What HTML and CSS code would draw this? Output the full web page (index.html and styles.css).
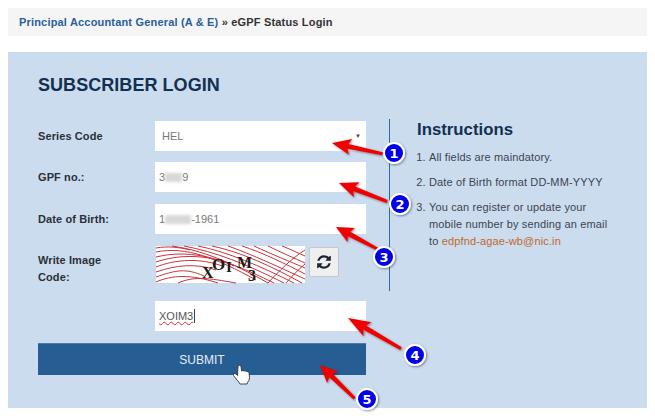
FILE: index.html
```html
<!doctype html>
<html lang="en">

<head>
  <meta charset="utf-8" />
  <title>eGPF Status Login</title>
  <link rel="stylesheet" href="styles.css">
</head>

<body>
  <div class="breadcrumb">
    <a href="#">Principal Accountant General (A &amp; E)</a> <span class="sep">»</span> eGPF Status Login
  </div>

  <div class="panel">
    <h2>SUBSCRIBER LOGIN</h2>
    <div class="columns">
      <form class="login">
        <div class="row first-row">
          <label>Series Code</label>
          <div class="field select">HEL<span class="caret">▼</span></div>
        </div>
        <div class="row">
          <label>GPF no.:</label>
          <div class="field">3<span class="smudge s-short"></span>9</div>
        </div>
        <div class="row">
          <label>Date of Birth:</label>
          <div class="field">1<span class="smudge s-long"></span>-1961</div>
        </div>
        <div class="row captcha-row">
          <label>Write Image Code:</label>
          <div class="captcha-wrap">
            <svg class="captcha" width="149" height="37" viewBox="0 0 149 37">
              <rect width="149" height="37" fill="#fff" />
              <g fill="none" stroke="#c8343f" stroke-width="1">
                <path d="M0 6 C30 0 60 12 100 34" />
                <path d="M0 11 C30 4 60 8 118 37" />
                <path d="M0 16 C20 9 50 7 78 20" />
                <path d="M0 21 C20 13 45 12 66 20" />
                <path d="M0 26 C20 19 40 17 60 24" />
                <path d="M0 31 C20 24 30 22 48 30" />
                <path d="M0 36 C16 29 34 28 62 37" />
                <path d="M16 0 C45 4 75 16 112 37" />
                <path d="M28 0 C60 6 90 18 128 37" />
                <path d="M42 0 C72 6 104 20 138 37" />
                <path d="M56 0 C85 6 115 20 146 37" />
                <path d="M72 0 C95 8 125 22 149 33" />
                <path d="M86 0 C105 6 130 18 149 28" />
                <path d="M98 0 C115 8 135 16 149 22" />
                <path d="M112 0 C124 6 138 12 149 17" />
                <path d="M126 0 C134 3 142 7 149 10" />
                <path d="M112 37 C122 26 136 12 149 4" />
                <path d="M130 37 C136 30 142 24 149 18" />
                <path d="M0 2 C12 0 22 1 34 4" />
                <path d="M22 37 C38 30 52 32 80 37" />
              </g>
              <g class="captcha-text" fill="#1a1a1a">
                <text x="46" y="32" font-size="16">X</text>
                <text x="56" y="24" font-size="17">O</text>
                <text x="70" y="26" font-size="15">I</text>
                <text x="81" y="22" font-size="16">M</text>
                <text x="92" y="35" font-size="16">3</text>
              </g>
            </svg>
            <button type="button" class="refresh">
              <svg width="16" height="16" viewBox="0 0 1792 1792">
                <path fill="#1c2530" d="M1639 1056q0 5-1 7-64 268-268 434.5t-478 166.5q-146 0-282.5-55t-243.5-157l-129 129q-19 19-45 19t-45-19-19-45v-448q0-26 19-45t45-19h448q26 0 45 19t19 45-19 45l-137 137q71 66 161 102t187 36q134 0 250-65t186-179q11-17 53-117 8-23 30-23h192q13 0 22.5 9.5t9.5 22.5zm25-800v448q0 26-19 45t-45 19h-448q-26 0-45-19t-19-45 19-45l138-138q-148-137-349-137-134 0-250 65t-186 179q-11 17-53 117-8 23-30 23h-199q-13 0-22.5-9.5t-9.5-22.5v-7q65-268 270-434.5t480-166.5q146 0 284 55.5t245 156.5l130-129q19-19 45-19t45 19 19 45z" />
              </svg>
            </button>
          </div>
        </div>
        <div class="row">
          <label></label>
          <div class="field"><span class="typed">XOIM3</span><span class="text-cursor"></span></div>
        </div>
        <button type="button" class="submit">SUBMIT</button>
      </form>

      <div class="instructions">
        <h3>Instructions</h3>
        <ol>
          <li>All fields are maindatory.</li>
          <li>Date of Birth format DD-MM-YYYY</li>
          <li>You can register or update your mobile number by sending an email to <a href="#">edpfnd-agae-wb@nic.in</a></li>
        </ol>
      </div>
    </div>
  </div>

  <!-- annotations pasted over the screenshot -->
  <svg class="marks" width="655" height="420" viewBox="0 0 655 420">
    <defs>
      <filter id="soft" x="-30%" y="-30%" width="160%" height="160%">
        <feDropShadow dx="1" dy="1" stdDeviation="1" flood-color="#000" flood-opacity="0.45" />
      </filter>
      <path id="arrow" d="M0 0 L22 -8 L19 -2.500 L60 -1.500 L60 1.500 L19 2.500 L22 8 Z" fill="#f00000" />
    </defs>
    <g filter="url(#soft)">
      <use href="#arrow" transform="translate(332 143) rotate(12) scale(0.86 1)" />
      <use href="#arrow" transform="translate(339 183) rotate(21) scale(0.86 1)" />
      <use href="#arrow" transform="translate(336 227) rotate(28) scale(0.78 1)" />
      <use href="#arrow" transform="translate(348 318) rotate(30) scale(1.02 1)" />
      <use href="#arrow" transform="translate(320 365) rotate(44) scale(0.8 1)" />
    </g>

    <g class="badge" filter="url(#soft)">
      <circle cx="394" cy="153" r="10" />
      <circle cx="400" cy="204" r="10" />
      <circle cx="384" cy="257" r="10" />
      <circle cx="415" cy="355" r="10" />
      <circle cx="367" cy="399" r="10" />
    </g>
    <g class="badge-num">
      <text x="394" y="158">1</text>
      <text x="400" y="209">2</text>
      <text x="384" y="262">3</text>
      <text x="415" y="360">4</text>
      <text x="367" y="404">5</text>
    </g>

    <path class="hand" d="M238 366 q1.500 -1.500 3 0 l0.500 5 q1.500 -1 2.500 0 q1.500 -0.500 2.500 0.500 q1.500 -0.500 2.500 1 l0.500 5 q0 3 -2 5 l-0.500 1.500 h-7 q-1 -2 -3 -4 l-3.500 -4.500 q-0.500 -1.500 1 -2 q1.500 0 3 2 z" />
  </svg>
</body>

</html>
```

FILE: styles.css
```css
* {
  box-sizing: border-box;
}

body {
  margin: 8px;
  font-family: "Liberation Sans", Arial, sans-serif;
  font-size: 11px;
  color: #333;
  background: #fff;
  overflow: hidden;
}

a {
  text-decoration: none;
}

.breadcrumb {
  height: 28px;
  line-height: 28px;
  padding-left: 11px;
  background: #f5f5f5;
  font-size: 11px;
  font-weight: bold;
  letter-spacing: 0.18px;
  color: #333;
}

.breadcrumb a {
  color: #2a6099;
}

.panel {
  margin-top: 16px;
  width: 640px;
  height: 356px;
  padding: 23px 30px 0;
  background: #cbdcef;
}

.panel h2 {
  margin: 0 0 22px;
  height: 21px;
  line-height: 21px;
  font-size: 18px;
  letter-spacing: 0.05px;
  color: #12304f;
}

/* Form on the left, instructions on the right */
.columns {
  display: flex;
  align-items: flex-start;
}

.login {
  width: 328px;
  margin-top: 3px;
  margin-right: 23px;
}

.row {
  display: flex;
  align-items: center;
  height: 30px;
  margin-bottom: 12px;
}

.first-row {
  margin-bottom: 11px;
}

.row label {
  flex: 0 0 117px;
  padding-right: 30px;
  font-weight: bold;
  line-height: 17px;
  letter-spacing: 0.1px;
  color: #2b3038;
}

.field {
  position: relative;
  flex: 1;
  height: 30px;
  line-height: 30px;
  padding-left: 4px;
  background: #fff;
  font-size: 11px;
  color: #777;
}

.select {
  padding-left: 7px;
}

.caret {
  position: absolute;
  right: 5px;
  top: 0;
  font-size: 6px;
  color: #444;
}

.smudge {
  display: inline-block;
  height: 9px;
  background: #d8d8d8;
  filter: blur(1.5px);
  vertical-align: -1px;
}

.s-short {
  width: 17px;
}

.s-long {
  width: 26px;
}

.typed {
  color: #555;
  text-decoration: underline wavy #e03030 1px;
}

.text-cursor {
  display: inline-block;
  width: 1px;
  height: 14px;
  margin-left: 1px;
  background: #444;
  vertical-align: -3px;
}

.captcha-row {
  height: 37px;
  margin-bottom: 18px;
  align-items: flex-start;
}

.captcha-row label {
  padding-top: 6px;
}

.captcha-wrap {
  display: flex;
  align-items: flex-start;
  gap: 4px;
  margin-left: 1px;
}

.captcha {
  overflow: visible;
}

.captcha-text {
  font-family: "Liberation Serif", "Times New Roman", serif;
  font-weight: bold;
}

.refresh {
  display: flex;
  align-items: center;
  justify-content: center;
  width: 30px;
  height: 30px;
  margin-top: 1px;
  padding: 0;
  background: #efefef;
  border: 1px solid #c4c8cc;
  border-radius: 2px;
}

.submit {
  display: block;
  width: 328px;
  height: 32px;
  border: 0;
  border-top: 1px solid #4a7aa8;
  background: #265d92;
  color: #e8eef5;
  font-family: "Liberation Sans", Arial, sans-serif;
  font-size: 12px;
}

.instructions {
  width: 230px;
  height: 172px;
  margin-top: 1px;
  padding: 1px 0 0 27px;
  border-left: 1px solid #2a6da5;
}

.instructions h3 {
  margin: 0 0 10px;
  font-size: 16.800px;
  line-height: 19px;
  color: #12304f;
}

.instructions ol {
  width: 194px;
  margin: 0;
  padding-left: 12px;
  letter-spacing: 0.14px;
  color: #3d4450;
}

.instructions li {
  margin-bottom: 8px;
  line-height: 17px;
}

.instructions a {
  color: #c0692b;
}

/* Annotation layer */
.marks {
  position: absolute;
  left: 0;
  top: 0;
}

.badge circle {
  fill: #0000e6;
  stroke: #fff;
  stroke-width: 2;
}

.badge-num text {
  font-family: "DejaVu Sans", sans-serif;
  font-size: 13px;
  font-weight: bold;
  fill: #fff;
  text-anchor: middle;
}

.hand {
  fill: #fff;
  stroke: #222;
  stroke-width: 0.8;
}
```
